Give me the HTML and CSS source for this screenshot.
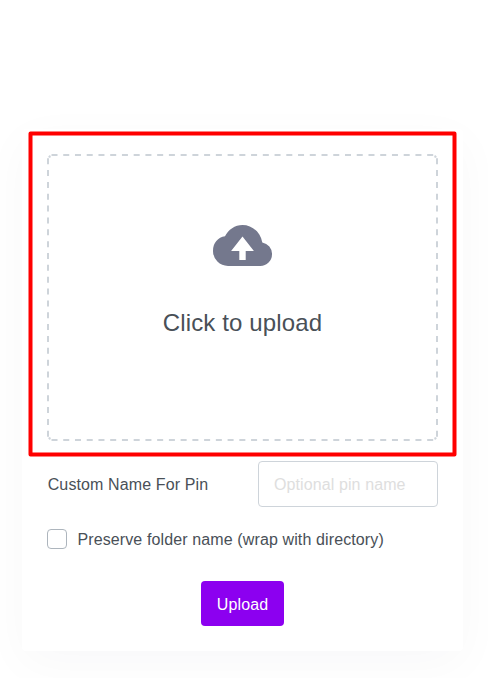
FILE: index.html
```html
<!DOCTYPE html>
<html lang="en">
<head>
<meta charset="utf-8">
<title>Upload</title>
<link rel="stylesheet" href="styles.css">
</head>
<body>
<form class="card">
  <svg class="highlight" width="430" height="327" viewBox="0 0 430 327" fill="none">
    <rect x="2.500" y="2.500" width="424" height="321" stroke="#f00" stroke-width="4" stroke-linejoin="round"/>
  </svg>
  <div class="dropzone">
    <svg class="dashes" width="391" height="287" viewBox="0 0 391 287" fill="none">
      <path class="horizontal" d="M4.500 1H386.200M4.500 286H386.200"/>
      <path class="vertical" d="M1 4.200V282.800M390 4.200V282.800"/>
      <path d="M2 3.500Q2.500 2.500 3.500 2M387.500 2Q388.500 2.500 389 3.500M2 283.500Q2.500 284.500 3.500 285M387.500 285Q388.500 284.500 389 283.500"/>
    </svg>
    <svg class="cloud" width="59" height="42" viewBox="0 0 59 42">
      <path fill="#74788d" fill-rule="evenodd" d="M15 41.900A15 15 0 0 1 0 26.900C0 19 5 13.200 12 12.300C15.200 5.500 22 0.900 29.500 0.900C39 0.900 47.500 8 49.300 18.400A11.700 11.700 0 0 1 59 30.200A11.700 11.700 0 0 1 47.300 41.900ZM29.500 12.600L18.100 26.900H26.300V35.900H32.700V26.900H40.900Z"/>
    </svg>
    <h4 class="prompt">Click to upload</h4>
  </div>
  <div class="field">
    <label class="field-label" for="pin">Custom Name For Pin</label>
    <input id="pin" class="pin-name" type="text" placeholder="Optional pin name">
  </div>
  <label class="option"><input class="check" type="checkbox"><span class="option-text">Preserve folder name (wrap with directory)</span></label>
  <button class="submit" type="button">Upload</button>
</form>
</body>
</html>
```
FILE: styles.css
```css
* {
  box-sizing: border-box;
}

body {
  margin: 0;
  height: 678px;
  overflow: hidden;
  background: #fff;
  color: #495057;
  font: 16px/24px "Liberation Sans", Arial, sans-serif;
}

.card {
  position: relative;
  display: flex;
  flex-direction: column;
  width: 441px;
  height: 522px;
  margin: 129px 0 0 22px;
  padding: 25px;
  border-radius: 4px;
  background: #fff;
  box-shadow: 0 12px 48px rgba(18, 38, 63, 0.03);
}

.highlight {
  position: absolute;
  top: 2px;
  left: 6px;
  pointer-events: none;
}

.dropzone {
  position: relative;
  display: flex;
  flex-direction: column;
  align-items: center;
  height: 287px;
  padding-top: 70px;
}

.dashes {
  position: absolute;
  inset: 0;
  stroke: #ced4da;
  stroke-width: 2;
}

.horizontal {
  stroke-dasharray: 6 5.74;
}

.vertical {
  stroke-dasharray: 6 5.85;
}

.cloud {
  display: block;
}

.prompt {
  margin: 42px 0 0;
  font-size: 24px;
  font-weight: 400;
  line-height: 29px;
  letter-spacing: 0.14px;
}

.field {
  display: flex;
  align-items: center;
  justify-content: space-between;
  height: 46px;
  margin-top: 20px;
}

.field-label {
  padding: 2px 0 0 0.7px;
  letter-spacing: 0.12px;
}

.pin-name {
  width: 180px;
  height: 46px;
  padding: 2px 15px 0;
  border: 1px solid #ced4da;
  border-radius: 4px;
  background: #fff;
  color: inherit;
  font: inherit;
  letter-spacing: 0.1px;
}

.pin-name::placeholder {
  color: #dedede;
  opacity: 1;
}

.option {
  display: flex;
  align-items: center;
  gap: 10.4px;
  height: 24px;
  margin-top: 20px;
}

.option-text {
  padding-top: 2px;
  letter-spacing: 0.12px;
}

.check {
  appearance: none;
  width: 20px;
  height: 20px;
  margin: 0;
  border: 1px solid #adb5bd;
  border-radius: 4px;
}

.submit {
  align-self: center;
  width: 83px;
  height: 45px;
  margin-top: 30px;
  padding: 2px 0 0;
  border: 0;
  border-radius: 4px;
  background: #8c00f0;
  color: #fff;
  font: inherit;
  letter-spacing: 0.1px;
}
```
